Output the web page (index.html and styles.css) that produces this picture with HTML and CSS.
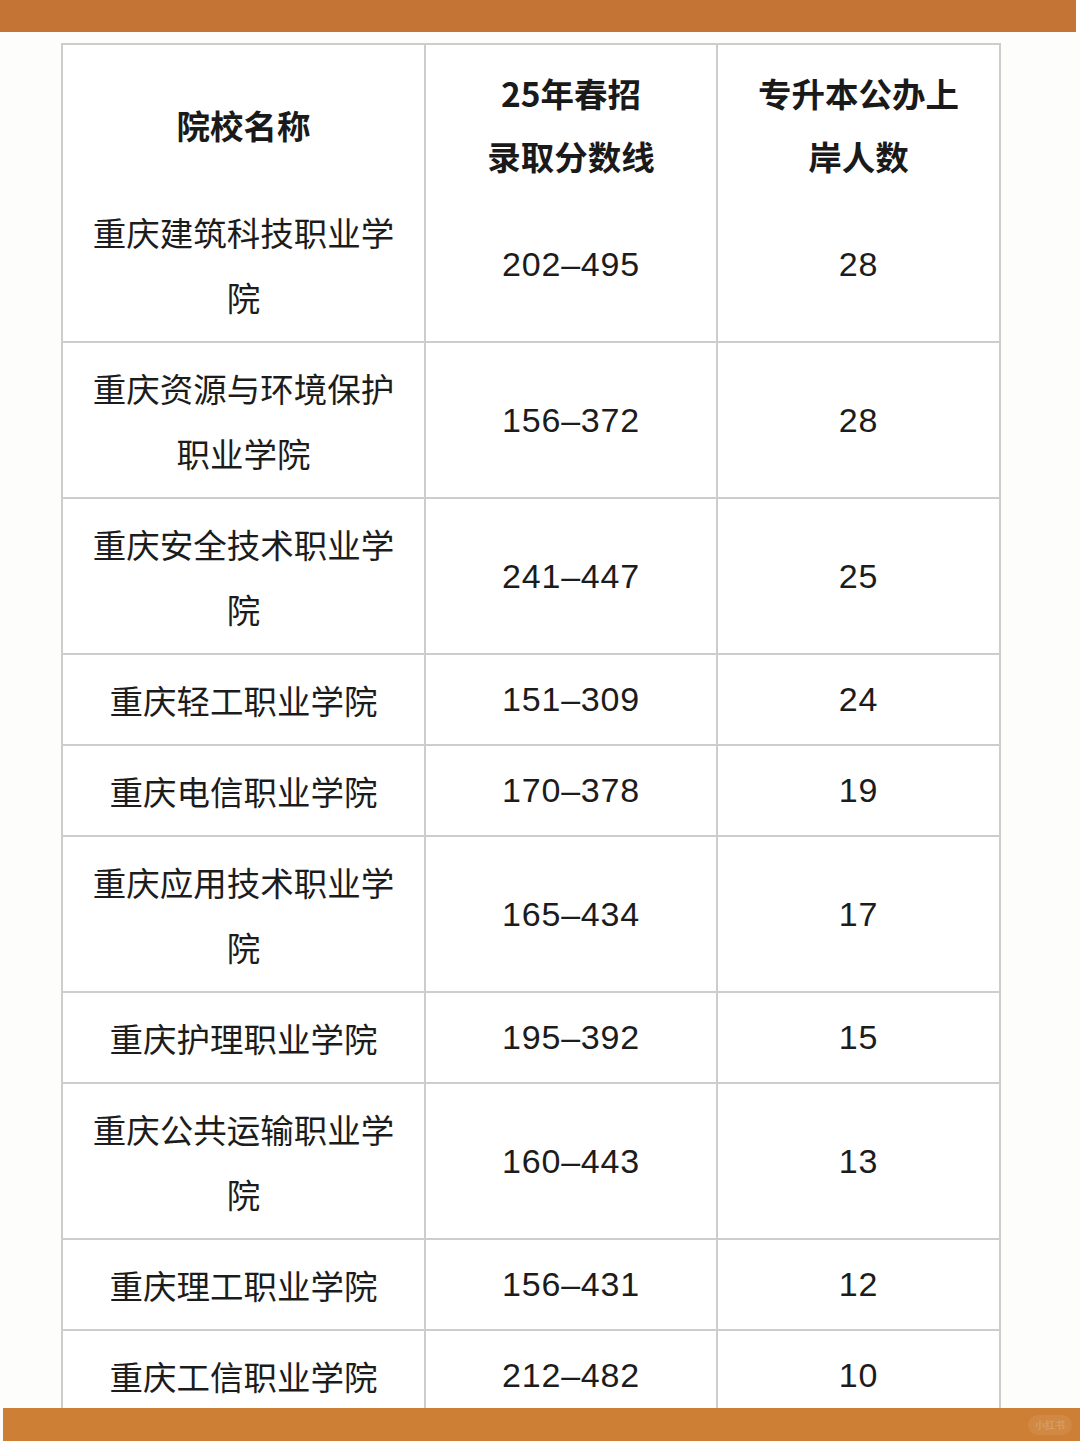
FILE: index.html
```html
<!DOCTYPE html>
<html lang="zh-CN">
<head>
<meta charset="utf-8">
<title>重庆专升本公办上岸人数</title>
<link rel="stylesheet" href="styles.css">
</head>
<body>
<div class="bar bar-top"></div>
<div class="sheet">
  <table class="grid">
    <colgroup>
      <col class="c1"><col class="c2"><col class="c3">
    </colgroup>
    <thead>
      <tr>
        <th>院校名称</th>
        <th>25年春招<br>录取分数线</th>
        <th>专升本公办上<br>岸人数</th>
      </tr>
    </thead>
    <tbody>
      <tr><td class="name">重庆建筑科技职业学院</td><td class="num">202–495</td><td class="num">28</td></tr>
      <tr><td class="name">重庆资源与环境保护职业学院</td><td class="num">156–372</td><td class="num">28</td></tr>
      <tr><td class="name">重庆安全技术职业学院</td><td class="num">241–447</td><td class="num">25</td></tr>
      <tr><td class="name">重庆轻工职业学院</td><td class="num">151–309</td><td class="num">24</td></tr>
      <tr><td class="name">重庆电信职业学院</td><td class="num">170–378</td><td class="num">19</td></tr>
      <tr><td class="name">重庆应用技术职业学院</td><td class="num">165–434</td><td class="num">17</td></tr>
      <tr><td class="name">重庆护理职业学院</td><td class="num">195–392</td><td class="num">15</td></tr>
      <tr><td class="name">重庆公共运输职业学院</td><td class="num">160–443</td><td class="num">13</td></tr>
      <tr><td class="name">重庆理工职业学院</td><td class="num">156–431</td><td class="num">12</td></tr>
      <tr><td class="name">重庆工信职业学院</td><td class="num">212–482</td><td class="num">10</td></tr>
    </tbody>
  </table>
</div>
<div class="bar bar-bottom"><span class="mark">小红书</span></div>
</body>
</html>
```

FILE: styles.css
```css
html, body {
  margin: 0;
  padding: 0;
}
body {
  width: 1080px;
  height: 1443px;
  background: #fdfdfb;
  font-family: "Noto Sans CJK SC", "Noto Sans", sans-serif;
  color: #1c1c1c;
  overflow: hidden;
}
.bar {
  height: 32px;
}
.bar-top {
  width: 1076px;
  background: #c47434;
}
.sheet {
  height: 1376px;
  overflow: hidden;
  padding-left: 61px;
  box-sizing: border-box;
  padding-top: 11px;
}
.bar-bottom {
  height: 33px;
  margin-left: 3px;
  background: #cd7f35;
  display: flex;
  align-items: center;
  justify-content: flex-end;
  padding-right: 8px;
}
.mark {
  font-size: 10px;
  line-height: 20px;
  padding: 0 7px;
  border-radius: 10px;
  background: rgba(255, 255, 255, 0.07);
  color: rgba(255, 255, 255, 0.18);
  font-weight: 700;
}
.grid {
  border-collapse: collapse;
  table-layout: fixed;
  width: 940px;
  background: #ffffff;
}
.c1 { width: 363px; }
.c2 { width: 292px; }
.c3 { width: 283px; }
.grid th, .grid td {
  border: 2px solid #cdcdcd;
  text-align: center;
  vertical-align: middle;
  font-size: 33.5px;
  line-height: 65px;
}
.grid th {
  font-weight: 700;
  color: #1a1a1a;
  line-height: 63px;
  padding: 16px 0 0;
  border-bottom: 0;
}
.grid tbody tr:first-child td {
  border-top: 0;
}
.grid td {
  padding: 12px 27px;
}
.grid td.num {
  font-family: "Liberation Sans", Arial, sans-serif;
  font-size: 34px;
  letter-spacing: 0.8px;
  color: #1c1c1c;
}
```
